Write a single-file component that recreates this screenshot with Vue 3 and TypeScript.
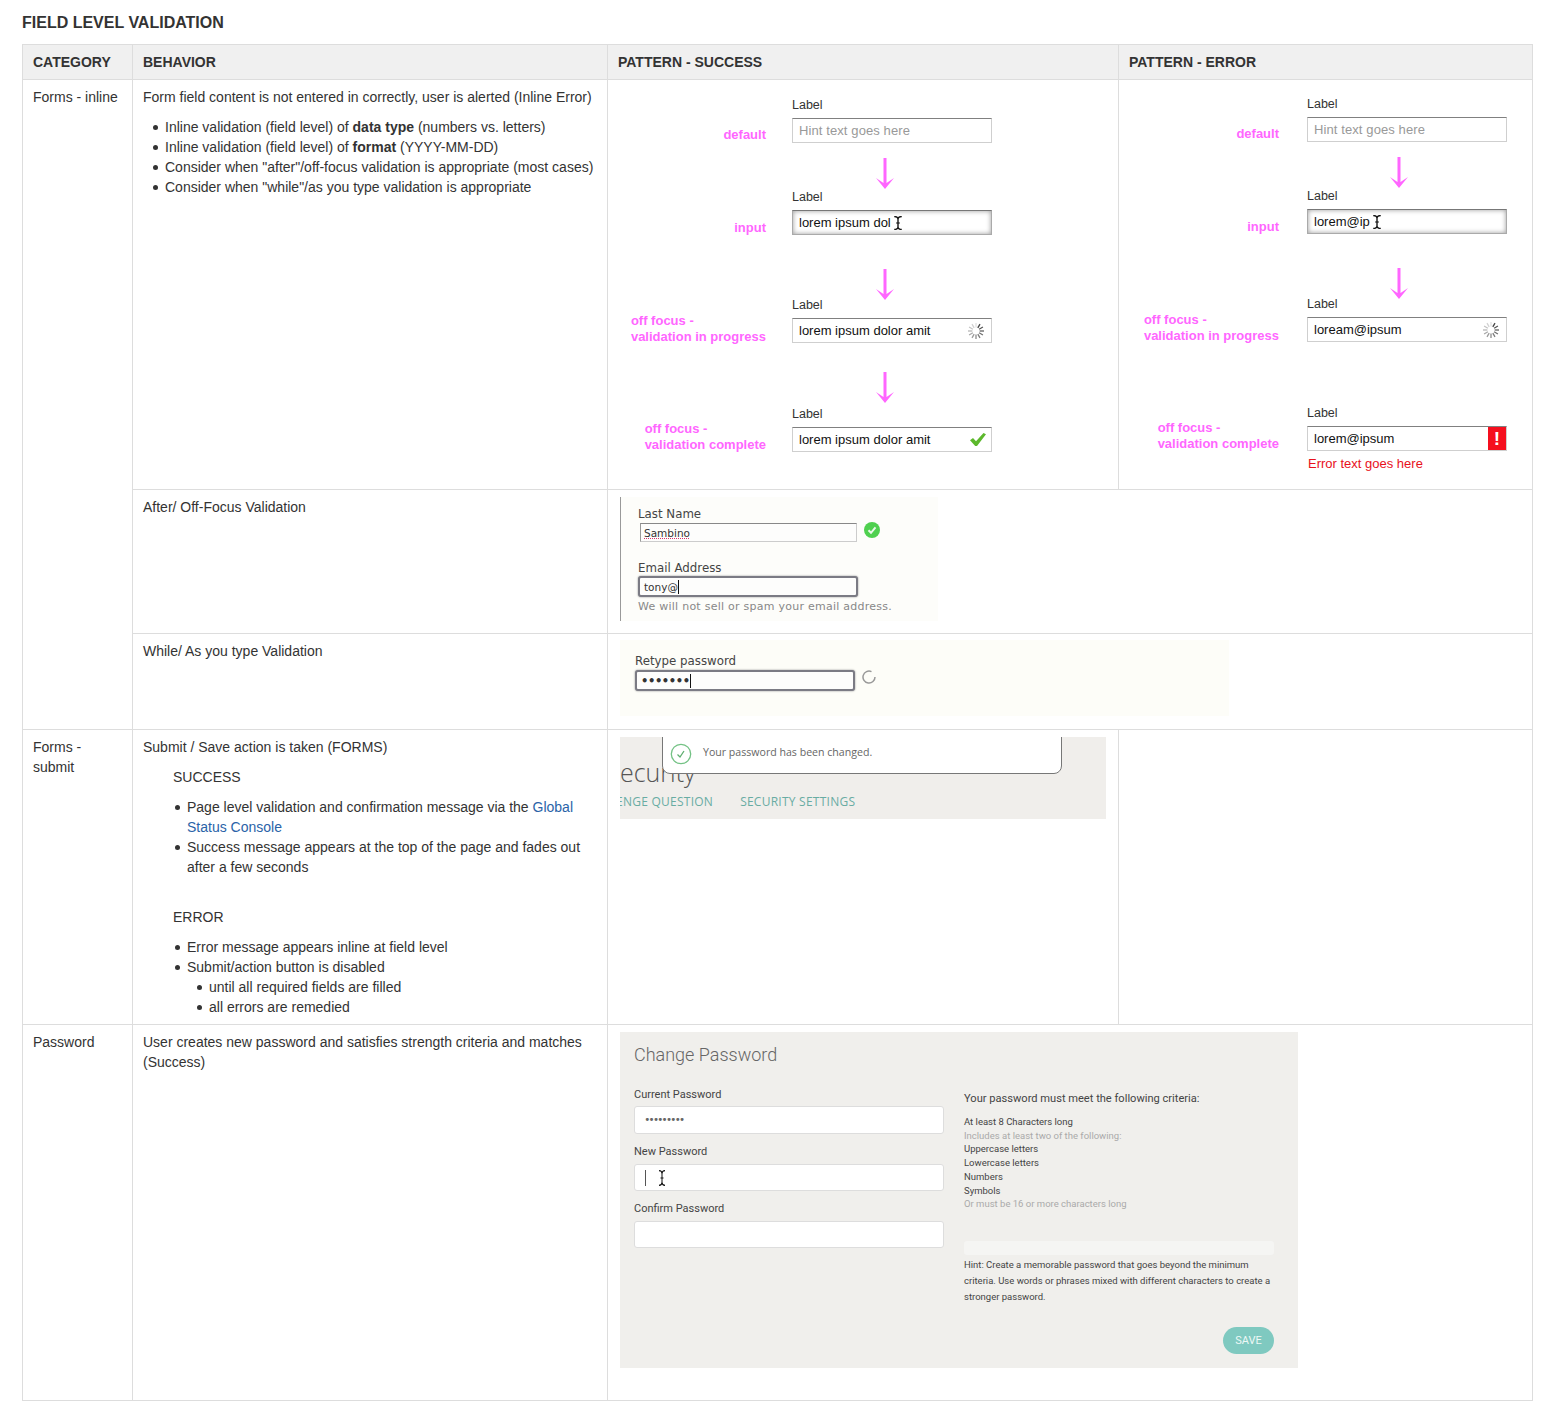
<script setup lang="ts">
interface State {
  anno: string[]
  annoShift: number
  value: string
  hint?: boolean
  focus?: boolean
  cursor?: boolean
  icon?: 'spin' | 'check' | 'error'
  gap?: number
  pad?: number
  error?: string
}
const success: State[] = [
  { anno: ['default'], annoShift: 0, value: 'Hint text goes here', hint: true, gap: 43, pad: 15 },
  { anno: ['input'], annoShift: -1, value: 'lorem ipsum dol', focus: true, cursor: true, gap: 59, pad: 34 },
  { anno: ['off focus -', 'validation in progress'], annoShift: -2, value: 'lorem ipsum dolor amit', icon: 'spin', gap: 60, pad: 29 },
  { anno: ['off focus -', 'validation complete'], annoShift: -1, value: 'lorem ipsum dolor amit', icon: 'check' }
]
const failure: State[] = [
  { anno: ['default'], annoShift: 0, value: 'Hint text goes here', hint: true, gap: 43, pad: 15 },
  { anno: ['input'], annoShift: -1, value: 'lorem@ip', focus: true, cursor: true, gap: 59, pad: 34 },
  { anno: ['off focus -', 'validation in progress'], annoShift: -2, value: 'loream@ipsum', icon: 'spin', gap: 60 },
  { anno: ['off focus -', 'validation complete'], annoShift: -1, value: 'lorem@ipsum', icon: 'error', error: 'Error text goes here' }
]
const columns = [
  { key: 'success', states: success },
  { key: 'failure', states: failure }
]
const ticks = Array.from({ length: 12 }, (_, i) => ({
  angle: i * 30,
  shade: Math.round(70 + ((i + 12 - 1) % 12) * 14)
}))
const cursorPath = 'M1 .5C3 .5 4 1.5 4 3V10C4 11.5 5 12.5 7 12.5M7 .5C5 .5 4 1.5 4 3M4 10C4 11.5 3 12.5 1 12.5M2.5 6.5H5.5'
const criteria = [
  { text: 'At least 8 Characters long', dim: false },
  { text: 'Includes at least two of the following:', dim: true },
  { text: 'Uppercase letters', dim: false },
  { text: 'Lowercase letters', dim: false },
  { text: 'Numbers', dim: false },
  { text: 'Symbols', dim: false },
  { text: 'Or must be 16 or more characters long', dim: true }
]
</script>

<template>
  <div class="page">
    <h1 class="title">FIELD LEVEL VALIDATION</h1>
    <table class="matrix">
      <colgroup>
        <col class="c1" /><col class="c2" /><col class="c3" /><col class="c4" />
      </colgroup>
      <thead>
        <tr class="r-head">
          <th>CATEGORY</th><th>BEHAVIOR</th><th>PATTERN - SUCCESS</th><th>PATTERN - ERROR</th>
        </tr>
      </thead>
      <tbody>
        <tr class="r1">
          <td rowspan="3">Forms - inline</td>
          <td>
            <p>Form field content is not entered in correctly, user is alerted (Inline Error)</p>
            <ul class="list-a">
              <li>Inline validation (field level) of <b>data type</b> (numbers vs. letters)</li>
              <li>Inline validation (field level) of <b>format</b> (YYYY-MM-DD)</li>
              <li>Consider when "after"/off-focus validation is appropriate (most cases)</li>
              <li>Consider when "while"/as you type validation is appropriate</li>
            </ul>
          </td>
          <td v-for="col in columns" :key="col.key" class="flush">
            <div class="pattern" :class="col.key">
              <template v-for="(s, i) in col.states" :key="i">
                <div class="anno" :style="{ marginBottom: s.annoShift + 'px' }">
                  <div><div v-for="line in s.anno" :key="line">{{ line }}</div></div>
                </div>
                <div class="field">
                  <div class="flabel">Label</div>
                  <div class="fbox" :class="{ focus: s.focus }">
                    <span class="ftext" :class="{ hint: s.hint }">{{ s.value }}</span>
                    <svg v-if="s.cursor" class="ibeam" width="10" height="14" viewBox="0 0 8 13" preserveAspectRatio="none" fill="none" stroke="#111" stroke-width="1.1"><path :d="cursorPath" /></svg>
                    <svg v-if="s.icon === 'spin'" class="spin" width="18" height="18" viewBox="0 0 18 18">
                      <line v-for="t in ticks" :key="t.angle" x1="9" y1="1" x2="9" y2="5.4" :stroke="`rgb(${t.shade},${t.shade},${t.shade})`" stroke-width="1.3" :transform="`rotate(${t.angle} 9 9)`" />
                    </svg>
                    <svg v-if="s.icon === 'check'" class="check" width="16" height="13" viewBox="0 0 16 13"><path d="M0 7.2 3 5l3 3.2L13.5 0 16 1.2 7 13H5.2Z" fill="#5cb82c" /></svg>
                    <span v-if="s.icon === 'error'" class="bang">!</span>
                  </div>
                </div>
                <div v-if="s.gap" class="after" :style="{ height: s.gap + 'px', paddingTop: (s.pad || 0) + 'px' }">
                  <svg v-if="s.pad" class="arrow" width="18" height="31" viewBox="0 0 18 31"><path d="M7.5 0h3v25L18 20 9 31 0 20l7.5 5Z" fill="#ff66ff" /></svg>
                </div>
                <div v-if="s.error" class="errtext">{{ s.error }}</div>
              </template>
            </div>
          </td>
        </tr>
        <tr class="r2">
          <td>After/ Off-Focus Validation</td>
          <td colspan="2" class="flush">
            <div class="shot shot-a">
              <div class="sl">Last Name</div>
              <div class="row">
                <div class="sin plain"><span class="squiggle">Sambino</span></div>
                <svg class="ok" width="16" height="16" viewBox="0 0 16 16"><circle cx="8" cy="8" r="8" fill="#4fd04f" /><path d="M4.5 8.2 7 10.8l4.5-5.4" fill="none" stroke="#eaf8ea" stroke-width="2" /></svg>
              </div>
              <div class="sl second">Email Address</div>
              <div class="sin ring"><span>tony@</span><i class="caret"></i></div>
              <div class="shint">We will not sell or spam your email address.</div>
            </div>
          </td>
        </tr>
        <tr class="r3">
          <td>While/ As you type Validation</td>
          <td colspan="2" class="flush">
            <div class="shot shot-b">
              <div class="sl">Retype password</div>
              <div class="row">
                <div class="sin ring wide"><span class="dots">•••••••</span><i class="caret"></i></div>
                <svg class="loader" width="14" height="14" viewBox="0 0 14 14"><path d="M9.5 1.6A6 6 0 1 0 13 7" fill="none" stroke="#999" stroke-width="1.5" /></svg>
              </div>
            </div>
          </td>
        </tr>
        <tr class="r4">
          <td>Forms - submit</td>
          <td>
            <p>Submit / Save action is taken (FORMS)</p>
            <p class="sub">SUCCESS</p>
            <ul class="list-b">
              <li>Page level validation and confirmation message via the <a>Global</a> <a>Status Console</a></li>
              <li>Success message appears at the top of the page and fades out after a few seconds</li>
            </ul>
            <p class="sub err">ERROR</p>
            <ul class="list-b">
              <li>Error message appears inline at field level</li>
              <li>Submit/action button is disabled
                <ul class="list-c">
                  <li>until all required fields are filled</li>
                  <li>all errors are remedied</li>
                </ul>
              </li>
            </ul>
          </td>
          <td class="flush">
            <div class="shot-c">
              <div class="sec-head">ecurity</div>
              <div class="sec-nav"><span>ENGE QUESTION</span><span>SECURITY SETTINGS</span></div>
              <div class="toast">
                <svg width="22" height="22" viewBox="0 0 22 22" fill="none"><circle cx="11" cy="11" r="9.7" stroke="#74c285" stroke-width="1.3" /><path d="M7.5 11.5 10 14l4-6" stroke="#5fae70" stroke-width="1.3" /></svg>
                <span>Your password has been changed.</span>
              </div>
            </div>
          </td>
          <td></td>
        </tr>
        <tr class="r5">
          <td>Password</td>
          <td>User creates new password and satisfies strength criteria and matches (Success)</td>
          <td colspan="2" class="flush">
            <div class="shot-d">
              <div class="d-left">
                <div class="d-title">Change Password</div>
                <div class="d-label first">Current Password</div>
                <div class="d-input tall"><span class="d-dots">•••••••••</span></div>
                <div class="d-label">New Password</div>
                <div class="d-input">
                  <i class="d-caret"></i>
                  <svg width="8" height="16" viewBox="0 0 8 13" preserveAspectRatio="none" fill="none" stroke="#111" stroke-width="1"><path :d="cursorPath" /></svg>
                </div>
                <div class="d-label">Confirm Password</div>
                <div class="d-input"></div>
              </div>
              <div class="d-right">
                <div class="d-head">Your password must meet the following criteria:</div>
                <div class="d-crit">
                  <div v-for="c in criteria" :key="c.text" :class="{ dim: c.dim }">{{ c.text }}</div>
                </div>
                <div class="d-bar"></div>
                <div class="d-hint">Hint: Create a memorable password that goes beyond the minimum criteria. Use words or phrases mixed with different characters to create a stronger password.</div>
                <div class="d-actions"><span class="d-save">SAVE</span></div>
              </div>
            </div>
          </td>
        </tr>
      </tbody>
    </table>
  </div>
</template>

<style>
html, body { background: #fff; }
</style>

<style scoped>
.page {
  padding: 13px 18px 14px 22px;
  font-family: "Liberation Sans", Arial, sans-serif;
  font-size: 14px;
  line-height: 20px;
  color: #333;
}
.title {
  margin: 0 0 11px;
  font-size: 16px;
  line-height: 20px;
  font-weight: bold;
}
.matrix {
  width: 1510px;
  table-layout: fixed;
  border-collapse: collapse;
}
.c1 { width: 110px; }
.c2 { width: 475px; }
.c3 { width: 511px; }
.c4 { width: 414px; }
th, td {
  border: 1px solid #ddd;
  padding: 7px 10px;
  text-align: left;
  vertical-align: top;
}
th { background: #f0f0f0; font-weight: bold; }
.r-head { height: 35px; }
.r1 { height: 410px; }
.r2 { height: 144px; }
.r3 { height: 96px; }
.r4 { height: 295px; }
.r5 { height: 376px; }
td.flush { padding: 0; }
p { margin: 0; }
ul { margin: 0; padding: 0; list-style: none; }
li { position: relative; }
li::before {
  content: "";
  position: absolute;
  left: -12px;
  top: 8px;
  width: 5px;
  height: 5px;
  border-radius: 50%;
  background: #333;
}
.list-a { margin-top: 10px; padding-left: 22px; }
.sub { margin: 10px 0 10px 30px; }
.sub.err { margin-top: 30px; }
.list-b { padding-left: 44px; }
.list-c { padding-left: 22px; }
a { color: #2a63a8; }
b { font-weight: bold; }

.pattern {
  display: grid;
  grid-template-columns: 138px 200px;
  column-gap: 26px;
  padding: 14px 0 0 20px;
  height: 395px;
  align-content: start;
}
.pattern.failure {
  column-gap: 28px;
  padding: 13px 0 0 22px;
}
.anno {
  grid-column: 1;
  align-self: end;
  display: flex;
  justify-content: flex-end;
  color: #ff66ff;
  font-size: 13px;
  line-height: 16px;
  font-weight: bold;
  white-space: nowrap;
}
.field { grid-column: 2; }
.flabel {
  font-size: 12.5px;
  line-height: 22px;
  margin-bottom: 2px;
  color: #333;
}
.fbox {
  height: 25px;
  box-sizing: border-box;
  border: 1px solid #cfcfcf;
  border-top-color: #808080;
  padding-left: 6px;
  display: flex;
  align-items: center;
  font-size: 13px;
  line-height: 20px;
  color: #111;
  background: #fff;
}
.fbox.focus {
  border-color: #aaa;
  border-top-color: #777;
  box-shadow: inset 0 0 5px #9a9a9a;
}
.ftext { flex: none; }
.ftext.hint { color: #999; letter-spacing: 0.1px; }
.ibeam { margin-left: 2px; flex: none; }
.spin { margin-left: auto; margin-right: 6px; }
.check { margin-left: auto; margin-right: 5px; }
.bang {
  margin-left: auto;
  width: 18px;
  height: 23px;
  background: #f50f1e;
  color: #fff;
  font-weight: bold;
  font-size: 19px;
  line-height: 23px;
  text-align: center;
}
.after { grid-column: 2; box-sizing: border-box; }
.arrow { display: block; margin-left: 84px; overflow: visible; }
.failure .arrow { margin-left: 83px; }
.errtext {
  grid-column: 2;
  margin: 5px 0 0 1px;
  color: #e8111c;
  font-size: 13px;
  line-height: 16px;
}

.shot { font-family: "DejaVu Sans", sans-serif; color: #444; box-sizing: border-box; }
.shot-a {
  width: 318px;
  height: 124px;
  margin: 7px 0 0 12px;
  padding: 9px 0 0 17px;
  border-left: 1px solid #999;
  background: #fdfdfa;
}
.shot-b {
  width: 609px;
  height: 76px;
  margin: 6px 0 0 12px;
  padding: 13px 0 0 15px;
  background: #fdfdf8;
}
.sl { font-size: 11.8px; line-height: 17px; color: #444; }
.sl.second { margin: 18px 0 -1px; }
.row { display: flex; align-items: flex-start; }
.sin {
  box-sizing: border-box;
  display: flex;
  align-items: center;
  font-size: 10.5px;
  color: #333;
  background: #fdfdfc;
}
.sin.plain {
  width: 217px;
  height: 19px;
  margin: 0 0 0 2px;
  padding-left: 3px;
  border: 1px solid #ccc;
  border-top-color: #888;
  border-left-color: #999;
}
.sin.ring {
  width: 220px;
  height: 21px;
  padding-left: 4px;
  border: 2px solid #7b7b84;
  border-radius: 3px;
  box-shadow: 0 0 2px #888;
}
.sin.wide { margin-top: 0; }
.squiggle { text-decoration: underline dotted #d6336c; }
.ok { margin: -1px 0 0 7px; }
.caret { width: 1px; height: 14px; background: #111; margin-left: 0; }
.dots { letter-spacing: -0.4px; font-size: 11.5px; font-weight: bold; }
.loader { margin: 0 0 0 7px; }
.shint { margin-top: 1px; font-size: 11px; line-height: 18px; color: #888; letter-spacing: 0.25px; }

.shot-c {
  position: relative;
  width: 486px;
  height: 82px;
  margin: 7px 0 0 12px;
  background: #f0eeeb;
  overflow: hidden;
  font-family: "Open Sans", sans-serif;
}
.sec-head {
  padding-top: 17px;
  font-size: 25px;
  line-height: 36px;
  font-weight: 300;
  color: #555;
}
.sec-nav {
  display: flex;
  gap: 27px;
  margin: 4px 0 0 -4px;
  font-size: 12px;
  line-height: 16px;
  letter-spacing: 0.25px;
  color: #69aca3;
}
.toast {
  position: absolute;
  left: 42px;
  top: -8px;
  box-sizing: border-box;
  width: 400px;
  height: 45px;
  padding: 13px 0 0 7px;
  display: flex;
  align-items: flex-start;
  gap: 11px;
  background: #fff;
  border: 1px solid #777;
  border-radius: 0 0 8px 8px;
  font-size: 10.6px;
  line-height: 18px;
  color: #666;
}

.shot-d {
  display: grid;
  grid-template-columns: 310px 310px;
  column-gap: 20px;
  width: 678px;
  height: 336px;
  box-sizing: border-box;
  margin: 7px 0 0 12px;
  padding: 0 0 0 14px;
  background: #f0efec;
  font-family: Roboto, sans-serif;
  color: #444;
}
.d-title {
  padding-top: 9px;
  font-size: 18px;
  line-height: 28px;
  font-weight: 300;
  color: #666;
}
.d-label { font-size: 11px; line-height: 16px; margin: 10px 0 4px; color: #444; }
.d-label.first { margin: 18px 0 3px; }
.d-input {
  box-sizing: border-box;
  height: 27px;
  padding-left: 10px;
  display: flex;
  align-items: center;
  background: #fff;
  border: 1px solid #ddd;
  border-radius: 3px;
}
.d-input.tall { height: 28px; }
.d-dots { font-size: 12.5px; font-weight: bold; color: #666; letter-spacing: -0.15px; }
.d-caret { width: 1px; height: 16px; background: #555; margin-right: 12px; }
.d-head { margin-top: 59px; font-size: 11.1px; line-height: 16px; color: #444; }
.d-crit { margin-top: 8px; font-size: 9.5px; line-height: 13.7px; color: #444; }
.d-crit .dim { color: #aaa; }
.d-bar { height: 14px; margin-top: 30px; background: #f5f5f3; border-radius: 3px; }
.d-hint { margin-top: 2px; font-size: 9.5px; line-height: 16px; color: #444; }
.d-actions { margin-top: 22px; display: flex; justify-content: flex-end; }
.d-save {
  width: 51px;
  height: 27px;
  border-radius: 14px;
  background: #7fc9c0;
  color: #eef8f6;
  font-size: 11px;
  line-height: 27px;
  text-align: center;
}
</style>
